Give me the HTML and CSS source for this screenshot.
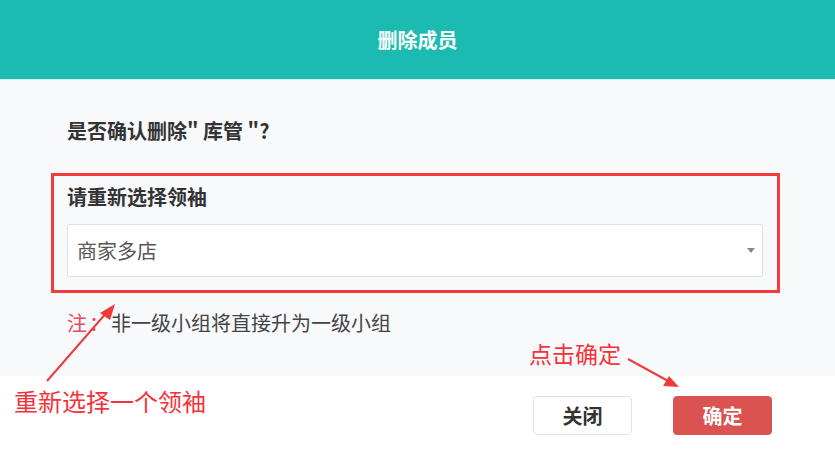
FILE: index.html
```html
<!DOCTYPE html>
<html lang="zh-CN">

<head>
    <meta charset="UTF-8" />
    <meta name="viewport" content="width=device-width, initial-scale=1.0" />
    <title>删除成员</title>
    <link rel="stylesheet" href="styles.css">
</head>

<body>
    <div class="dialog">
        <div class="dialog-header">删除成员</div>

        <div class="dialog-body">
            <p class="question">是否确认删除" 库管 "?</p>

            <div class="mark-box">
                <p class="field-label">请重新选择领袖</p>
                <div class="select">
                    <span>商家多店</span>
                    <i class="caret"></i>
                </div>
            </div>

            <p class="note"><span class="note-tag">注：</span>非一级小组将直接升为一级小组</p>
        </div>

        <div class="dialog-footer">
            <button class="btn btn-close">关闭</button>
            <button class="btn btn-ok">确定</button>
        </div>

        <!-- annotations drawn over the screenshot -->
        <span class="tip tip-leader">重新选择一个领袖</span>
        <span class="tip tip-ok">点击确定</span>
        <svg class="arrows" width="835" height="455" viewBox="0 0 835 455">
            <g stroke="#f03a3a" stroke-width="2" fill="#f03a3a">
                <line x1="47" y1="381" x2="108" y2="311" />
                <polygon points="115,304 100,313 110,320" stroke="none" />
                <line x1="628" y1="359" x2="670" y2="382" />
                <polygon points="679,387 663,386 669,376" stroke="none" />
            </g>
        </svg>
    </div>
</body>

</html>
```

FILE: styles.css
```css
* {
    box-sizing: border-box;
}

body {
    margin: 0;
    font-family: "Noto Sans CJK SC", "Noto Sans", sans-serif;
    color: #333;
}

p {
    margin: 0;
}

.dialog {
    position: relative;
    width: 835px;
    height: 455px;
    display: flex;
    flex-direction: column;
    background: #fff;
}

.dialog-header {
    height: 80px;
    background-color: #1bbbb1;
    border-bottom: 1px solid #e3ecec;
    color: #fff;
    font-size: 20px;
    font-weight: 600;
    text-align: center;
    line-height: 79px;
}

.dialog-body {
    height: 296px;
    background-color: #f8f9fb;
    padding: 37px 55px 0 51px;
}

.question {
    padding-left: 16px;
    font-size: 20px;
    font-weight: 700;
    line-height: 28px;
}

.mark-box {
    margin-top: 28px;
    width: 729px;
    border: 3px solid #f23c3c;
    padding: 7px 14px 13px 13px;
}

.field-label {
    font-size: 20px;
    font-weight: 700;
    line-height: 28px;
    margin-bottom: 13px;
}

.select {
    height: 53px;
    background: #fff;
    border: 1px solid #e2e2e2;
    border-radius: 2px;
    display: flex;
    align-items: center;
    justify-content: space-between;
    padding: 0 7px 0 9px;
    font-size: 20px;
    color: #555;
}

.caret {
    width: 0;
    height: 0;
    border-left: 4px solid transparent;
    border-right: 4px solid transparent;
    border-top: 5px solid #888;
}

.note {
    margin-top: 16px;
    padding-left: 16px;
    font-size: 20px;
    line-height: 28px;
    color: #444;
}

.note-tag {
    color: #e8485e;
    letter-spacing: 2px;
}

.dialog-footer {
    flex: 1;
    display: flex;
    justify-content: flex-end;
    align-items: flex-start;
    gap: 41px;
    padding: 20px 63px 0 0;
    background: #fff;
}

.btn {
    width: 99px;
    height: 39px;
    border-radius: 4px;
    font-family: inherit;
    font-size: 20px;
    font-weight: 700;
    cursor: pointer;
}

.btn-close {
    background: #fff;
    border: 1px solid #e2e2e2;
    color: #333;
}

.btn-ok {
    background: #da5350;
    border: 1px solid #da5350;
    color: #fff;
}

.tip {
    position: absolute;
    color: #f5323a;
    font-size: 23px;
    line-height: 30px;
    white-space: nowrap;
}

.tip-leader {
    left: 14px;
    top: 386px;
    font-size: 24px;
}

.tip-ok {
    left: 529px;
    top: 338px;
}

.arrows {
    position: absolute;
    left: 0;
    top: 0;
    pointer-events: none;
}
```
